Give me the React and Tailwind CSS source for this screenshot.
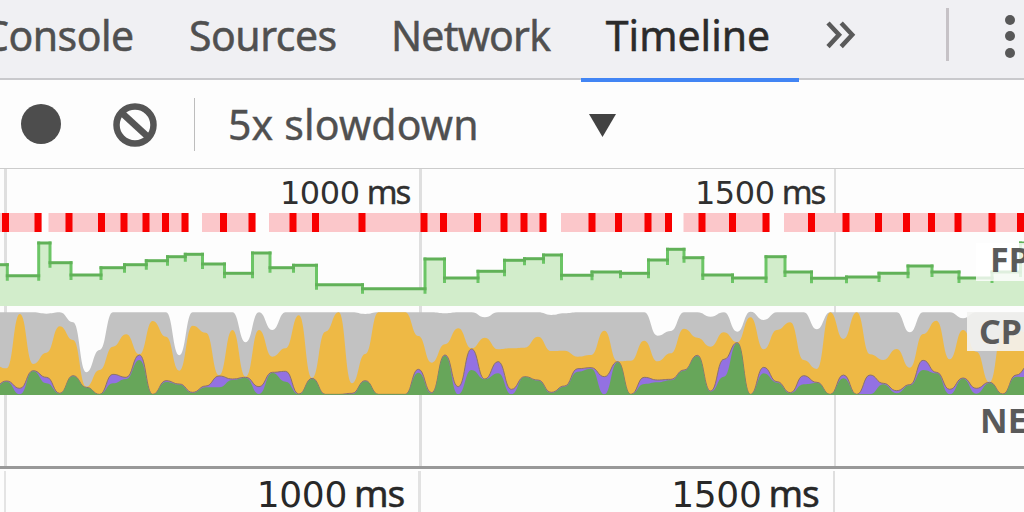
import React from "react";

const tabs = [
  { name: "Console", className: "-ml-[17px] w-[206px] tracking-[-0.5px]" },
  { name: "Sources", className: "w-[202px] tracking-[-0.5px]" },
  { name: "Network", className: "w-[190px] tracking-[-0.8px]" },
  { name: "Timeline", className: "w-[218px] pr-1" },
];

const gridLines = [
  "left-[4px] w-[3px]",
  "left-[419px] w-[3px]",
  "left-[834px] w-[2px]",
];

// [start, end] of every stretch that holds slow frames
const slowRanges = [[0, 42], [48.5, 188.5], [202, 255.5], [269, 546.5], [561, 672], [683.5, 769.5], [784, 1024]];

const slowFrames = [
  2, 34.5, 65.5, 98, 120.5, 142.5, 162, 181.5, 220, 248.5, 289.5, 312, 358.5,
  420.5, 440, 474, 500.5, 520.5, 539.5, 588.5, 615, 644.5, 665, 698.5, 729,
  762.5, 808, 842.5, 875, 903, 928, 954.5, 988.5, 1017,
];

// [x, y] where each frame starts
const fps = [
  [-4, 264.7], [7.3, 275.7], [38.7, 243], [50, 262.7], [71, 275], [101, 267.7],
  [124.5, 264.7], [146.3, 260.7], [167.5, 256.7], [185.3, 254.3], [202.5, 264],
  [224.5, 273.3], [252.5, 253], [270, 267.7], [293.5, 265.3], [316.5, 284.7],
  [362.5, 288.7], [425, 259], [444.5, 278], [478, 271.3], [504.5, 260.3],
  [524.5, 258.7], [543.5, 255], [561.5, 275.3], [592, 272], [620.5, 273.3],
  [648.5, 260], [667.5, 249.3], [684, 257.7], [702.8, 275], [732.5, 278],
  [766, 256.7], [785, 272], [811.5, 278.3], [846.5, 277], [879, 273.3],
  [908, 266], [932, 272], [959, 278], [992, 272], [1020.5, 243], [1030, 243],
];

// [idle, scripting, rendering, painting] tops per sample
const cpu = [
  [37, 195, 262, 265], [37, 205, 243, 245], [37, 42, 265, 283], [37, 192, 212, 214],
  [41, 158, 232, 250], [37, 79, 280, 281], [67, 120, 227, 229], [217, 260, 262, 263],
  [150, 210, 283, 283], [37, 140, 223, 250], [37, 103, 232, 237], [37, 163, 165, 180],
  [37, 63, 283, 283], [37, 110, 242, 246], [166, 212, 252, 254], [37, 77, 277, 279],
  [37, 98, 258, 262], [37, 226, 228, 262], [37, 90, 237, 240], [127, 230, 232, 234],
  [37, 90, 260, 282], [90, 170, 217, 219], [37, 145, 214, 245], [37, 46, 282, 283],
  [37, 234, 235, 237], [37, 95, 283, 283], [37, 37, 283, 283], [37, 250, 280, 283],
  [42, 162, 242, 244], [37, 37, 283, 283], [37, 37, 283, 283], [37, 37, 283, 283],
  [37, 108, 208, 218], [37, 188, 278, 280], [40, 133, 165, 167], [37, 85, 260, 283],
  [37, 145, 147, 210], [52, 113, 237, 238], [37, 148, 185, 220], [37, 145, 268, 283],
  [37, 143, 230, 231], [37, 110, 240, 242], [45, 153, 277, 279], [40, 152, 258, 260],
  [37, 170, 206, 215], [37, 165, 203, 206], [37, 92, 230, 283], [37, 184, 185, 187],
  [37, 182, 283, 283], [37, 122, 232, 252], [107, 184, 240, 247], [93, 160, 238, 241],
  [37, 86, 210, 212], [37, 113, 166, 168], [50, 140, 273, 275], [37, 97, 178, 230],
  [95, 127, 128, 130], [35, 52, 283, 283], [60, 148, 202, 220], [37, 90, 245, 248],
  [37, 67, 278, 280], [37, 180, 227, 253], [88, 207, 247, 249], [37, 37, 283, 283],
  [37, 117, 225, 235], [37, 37, 283, 283], [37, 163, 225, 283], [37, 180, 250, 253],
  [37, 147, 272, 280], [97, 203, 254, 256], [37, 102, 181, 210], [37, 62, 217, 220],
  [37, 178, 268, 283], [55, 90, 234, 236], [37, 155, 265, 281], [37, 247, 247, 249],
  [37, 90, 282, 283], [37, 90, 225, 230], [37, 100, 195, 232],
];

const STEP = 39.85;

function areaPath(series) {
  let d = `M-20 285V${cpu[0][series]}`;
  for (let i = 1; i < cpu.length; i++) {
    const x = -20 + i * STEP;
    const mid = x - STEP / 2;
    d += `C${mid} ${cpu[i - 1][series]} ${mid} ${cpu[i][series]} ${x} ${cpu[i][series]}`;
  }
  return d + "V285Z";
}

function fpsArea() {
  let d = "M-4 306";
  fps.forEach(([x, y]) => {
    d += `H${x}V${y}`;
  });
  return d + "V306Z";
}

function fpsLines() {
  let d = "";
  fps.forEach(([x, y], i) => {
    if (i > 0) {
      const prev = fps[i - 1][1];
      d += `M${x} ${Math.min(prev, y) - 1.5}V${Math.max(prev, y) + 5}`;
    }
  });
  return d;
}

function TimeLabel({ value, large }) {
  return (
    <span className={large ? "text-[37px] leading-[48px]" : "text-[33px] leading-[45px]"}>
      <span
        className={
          large
            ? "font-['DejaVu_Sans',sans-serif] text-[36px] tracking-[-0.3px]"
            : "font-['DejaVu_Sans',sans-serif] text-[32px] tracking-[-0.4px]"
        }
      >
        {value}
      </span>
      <span
        className={
          large
            ? "ml-[7px] tracking-[-1.2px] [-webkit-text-stroke:0.5px]"
            : "ml-[7px] tracking-[-2.2px] [-webkit-text-stroke:0.4px]"
        }
      >
        ms
      </span>
    </span>
  );
}

function TabBar() {
  return (
    <header className="flex h-20 border-b-2 border-[#c9c9cc] bg-[#f0f0f3] text-[41px] leading-[70px] text-[#505050] [-webkit-text-stroke:0.5px]">
      {tabs.map((tab) => (
        <button
          key={tab.name}
          className={
            tab.name === "Timeline"
              ? `relative h-[82px] shrink-0 border-b-4 border-[#4285f4] pb-2 text-center text-[#2b2b2b] ${tab.className}`
              : `h-[78px] shrink-0 pb-2 text-left ${tab.className}`
          }
        >
          {tab.name}
        </button>
      ))}
      <svg className="mt-5 ml-[25px] h-[30px] w-[34px] shrink-0" viewBox="0 0 34 30" fill="none" stroke="#5a5a5a" strokeWidth="4.5">
        <path d="M4 3L15 14.8L4 26.6M17.2 3L28.2 14.8L17.2 26.6" />
      </svg>
      <div className="mt-2 ml-[88px] h-[53px] w-[3px] shrink-0 bg-[#c6c2c6]" />
      <div className="mt-[14.5px] ml-[56px] flex shrink-0 flex-col gap-[6.5px]">
        <i className="size-[10px] rounded-full bg-[#585858]" />
        <i className="size-[10px] rounded-full bg-[#585858]" />
        <i className="size-[10px] rounded-full bg-[#585858]" />
      </div>
    </header>
  );
}

function Toolbar() {
  return (
    <div className="flex h-[89px] items-center border-b border-[#cccccc] pl-[21px]">
      <div className="size-10 rounded-full bg-[#4d4d4d]" />
      <svg className="mt-[2px] ml-[52px] size-[44px]" viewBox="0 0 44 44" fill="none" stroke="#555555" strokeWidth="6.5">
        <circle cx="22" cy="22" r="18.5" />
        <path d="M9.5 10.5L34.5 33.5" />
      </svg>
      <div className="ml-[37px] h-[53px] w-px bg-[#bdbdbd]" />
      <span className="ml-[33px] w-[361px] text-[41px] leading-[80px] tracking-[0.15px] text-[#505050] [-webkit-text-stroke:0.4px]">
        5x slowdown
      </span>
      <svg className="mt-[2px] h-[23px] w-[27px]" viewBox="0 0 27 23">
        <path d="M0 0H27L13.5 23Z" fill="#424242" />
      </svg>
    </div>
  );
}

function Overview() {
  return (
    <section className="relative h-[297px]">
      {gridLines.map((line) => (
        <div key={line} className={`absolute inset-y-0 bg-[#dfdfdf] ${line}`} />
      ))}

      <div className="relative flex h-[44px] text-right text-[#303030]">
        <div className="w-[409px]">
          <TimeLabel value="1000" />
        </div>
        <div className="w-[415px]">
          <TimeLabel value="1500" />
        </div>
      </div>

      <svg className="relative block h-[19px] w-full" viewBox="0 0 1024 19">
        {slowRanges.map(([start, end]) => (
          <rect key={start} x={start} width={end - start} height="19" fill="#fbc7ca" />
        ))}
        {slowFrames.map((x) => (
          <rect key={x} x={x} width="7" height="19" fill="#f80000" />
        ))}
      </svg>

      <svg className="relative block h-[74px] w-full" viewBox="0 232 1024 74" fill="none">
        <path d={fpsArea()} fill="#d2edcb" />
        <path d={fpsLines()} stroke="#6cc566" strokeWidth="3" />
        {fps.slice(0, -1).map(([x, y], i) => (
          <path key={x} d={`M${x - 1.5} ${y}H${fps[i + 1][0] + 1.5}`} stroke="#61b158" strokeWidth="3" />
        ))}
      </svg>

      <svg className="relative block h-[89px] w-full" viewBox="0 18 3072 267" preserveAspectRatio="none">
        <path d={areaPath(0)} fill="#c2c2c2" />
        <path d={areaPath(1)} fill="#eeb945" />
        <path d={areaPath(2)} fill="#9371e2" stroke="#8c7468" strokeWidth="3" />
        <path d={areaPath(3)} fill="#67a65a" />
      </svg>

      <div className="absolute top-[74px] right-0 h-[38px] w-12 overflow-hidden bg-white/80 pl-[14px] text-[34px] leading-[32px] font-bold text-[#5a5a5a]">
        FPS
      </div>
      <div className="absolute top-[143px] right-0 h-[39px] w-[57px] overflow-hidden bg-[#f3f3f1]/90 pl-[12px] text-[34px] leading-[38px] font-bold text-[#5a5a5a]">
        CPU
      </div>
      <div className="absolute top-[233px] right-0 h-[38px] w-[57px] overflow-hidden pl-[13px] text-[34px] leading-[36px] font-bold text-[#5a5a5a]">
        NET
      </div>
    </section>
  );
}

function Ruler() {
  return (
    <div className="relative h-[46px] border-t-[3px] border-[#999999]">
      <div className="absolute top-0.5 bottom-0 left-[4px] w-[2px] bg-[#e4e4e4]" />
      <div className="absolute top-0.5 bottom-0 left-[418px] w-[3px] bg-[#e2e2e2]" />
      <div className="absolute top-0.5 bottom-0 left-[833px] w-[2px] bg-[#dfdfdf]" />
      <div className="flex text-right text-[#282828]">
        <div className="w-[404px]">
          <TimeLabel value="1000" large />
        </div>
        <div className="w-[414.5px]">
          <TimeLabel value="1500" large />
        </div>
      </div>
    </div>
  );
}

function App() {
  return (
    <div className="h-[512px] w-[1024px] overflow-hidden bg-[#fdfdfd] font-['Noto_Sans',sans-serif]">
      <TabBar />
      <Toolbar />
      <Overview />
      <Ruler />
    </div>
  );
}

export default App;
